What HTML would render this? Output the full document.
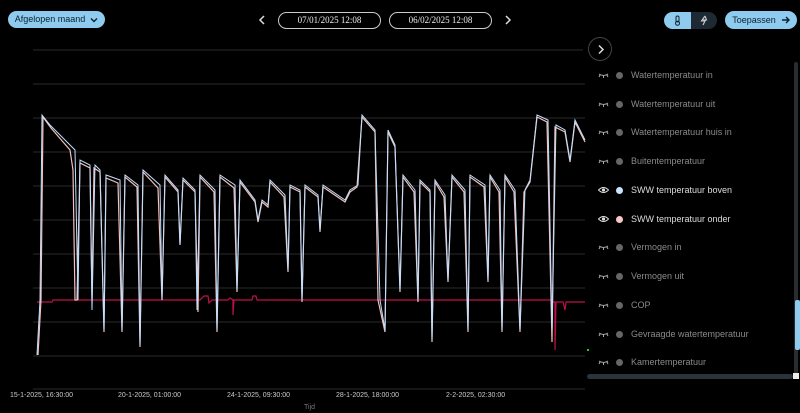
<!DOCTYPE html>
<html><head><meta charset="utf-8"><style>
*{margin:0;padding:0;box-sizing:border-box}
body{width:800px;height:413px;background:#000;overflow:hidden;position:relative;font-family:"Liberation Sans",sans-serif;color:#ddd}
.pill{position:absolute;border-radius:10px;font-size:9px;line-height:1;display:flex;align-items:center;justify-content:center;white-space:nowrap}
.leg{position:absolute;left:598px;font-size:9px;color:#8a8a8a;display:flex;align-items:center;height:12px}
.leg svg{width:11px;height:8px}
.leg .dot{width:7px;height:7px;border-radius:50%;background:#666;margin:0 8px 0 7px}
.leg.on{color:#ddd}
</style></head><body>
<div class="pill" style="left:8px;top:11px;width:97px;height:17px;background:#8ecbee;color:#0a2030">Afgelopen maand&nbsp;&nbsp;<svg width="8" height="6" viewBox="0 0 8 6"><path d="M1 1.5 L4 4.5 L7 1.5" stroke="#0a2030" stroke-width="1.4" fill="none"/></svg></div>
<svg style="position:absolute;left:258px;top:14px" width="8" height="12" viewBox="0 0 8 12"><path d="M6 2 L2 6 L6 10" stroke="#ddd" stroke-width="1.5" fill="none"/></svg>
<div class="pill" style="left:278px;top:12px;width:103px;height:17px;border:1.5px solid #ccc;color:#eee;font-family:'Liberation Serif',serif;font-size:9px">07/01/2025 12:08</div>
<div class="pill" style="left:389px;top:12px;width:103px;height:17px;border:1.5px solid #ccc;color:#eee;font-family:'Liberation Serif',serif;font-size:9px">06/02/2025 12:08</div>
<svg style="position:absolute;left:504px;top:14px" width="8" height="12" viewBox="0 0 8 12"><path d="M2 2 L6 6 L2 10" stroke="#ddd" stroke-width="1.5" fill="none"/></svg>
<div style="position:absolute;left:664px;top:12px;width:53px;height:17px;border-radius:9px;overflow:hidden;display:flex">
<div style="width:27px;background:#8ecbee;position:relative"><svg style="position:absolute;left:10px;top:3px" width="7" height="11" viewBox="0 0 7 11"><rect x="2" y="1" width="3" height="6" rx="1.5" stroke="#123" fill="none"/><circle cx="3.5" cy="8.3" r="2" stroke="#123" fill="none"/></svg></div>
<div style="width:26px;background:#1e2a33;position:relative"><svg style="position:absolute;left:9px;top:3px" width="8" height="11" viewBox="0 0 8 11"><path d="M5 1 L1.5 6 H5 L3 10 M5 1 L6.5 5 H3" stroke="#ccc" stroke-width="1.1" fill="none"/></svg></div></div>
<div class="pill" style="left:725px;top:11px;width:72px;height:18px;background:#8ecbee;color:#0a2030">Toepassen&nbsp;&nbsp;<svg width="9" height="8" viewBox="0 0 9 8"><path d="M1 4 H8 M5 1 L8 4 L5 7" stroke="#0a2030" stroke-width="1.4" fill="none"/></svg></div>
<div style="position:absolute;left:588px;top:37px;width:24px;height:24px;border:1px solid #444;border-radius:50%"><svg style="position:absolute;left:8px;top:6px" width="8" height="11" viewBox="0 0 8 11"><path d="M2 1.5 L6 5.5 L2 9.5" stroke="#ddd" stroke-width="1.5" fill="none"/></svg></div>
<svg style="position:absolute;left:0;top:0" width="800" height="413">
<g stroke="#2a2a2a" stroke-width="1">
<line x1="33" y1="50" x2="583" y2="50"/><line x1="33" y1="84" x2="585" y2="84"/><line x1="33" y1="118" x2="585" y2="118"/><line x1="33" y1="152" x2="585" y2="152"/><line x1="33" y1="186" x2="585" y2="186"/><line x1="33" y1="220" x2="585" y2="220"/><line x1="33" y1="254" x2="585" y2="254"/><line x1="33" y1="288" x2="585" y2="288"/><line x1="33" y1="322" x2="585" y2="322"/><line x1="33" y1="356" x2="585" y2="356"/><line x1="33" y1="389" x2="585" y2="389"/></g>
<polyline fill="none" stroke="#c0104a" stroke-width="1.2" points="37,302 52,302 53,300 200,300 204,296 208,296 209,303 212,300 228,300 230,298 233,300 233,315 234,300 252,300 253,296 256,296 257,300 550,300 553,302 555,302 555,350 556,302 563,302 565,310 566,302 585,302"/>
<polyline fill="none" stroke="#f5c0bc" stroke-width="1.2" points="38,355 41,300 43,117 51,128 70,150 73,170 75,300 77,300 80,163 90,168 92,300 94,168 100,172 104,332 106,178 118,183 122,332 125,177 137,187 140,347 143,172 158,188 162,300 165,177 178,192 180,245 183,180 195,192 198,312 200,177 214,192 217,332 220,177 234,188 237,292 240,182 255,202 258,222 262,202 268,207 270,182 284,197 288,272 290,187 300,192 302,302 305,187 318,197 320,232 323,187 345,202 350,192 357,187 362,117 375,132 378,300 385,332 388,132 395,147 400,292 403,177 414,192 418,302 420,182 430,192 432,342 435,182 444,197 448,282 452,177 464,192 468,332 470,177 484,187 488,282 490,177 499,192 502,332 505,177 514,192 520,332 524,192 530,182 537,117 547,122 552,342 555,127 565,132 570,162 575,122 585,142"/>
<polyline fill="none" stroke="#bfe0ff" stroke-width="1" points="37,355 40,300 42,115 50,125 75,150 78,300 80,160 90,165 92,310 95,165 100,170 104,330 106,175 120,180 122,330 125,175 138,185 140,345 143,170 160,185 162,300 165,175 178,190 180,245 183,178 195,190 197,310 200,175 215,190 217,330 220,175 235,185 237,290 240,180 255,200 258,220 262,200 268,205 270,180 285,195 288,270 290,185 300,190 302,300 305,185 318,195 320,230 323,185 345,200 350,190 358,185 362,115 375,130 380,300 385,330 388,130 395,145 400,290 403,175 415,190 418,300 420,180 430,190 432,340 435,180 445,195 448,280 452,175 465,190 468,330 470,175 485,185 488,280 490,175 500,190 502,330 505,175 515,190 520,330 525,190 530,180 537,115 548,120 552,330 556,125 565,130 570,160 575,120 585,140"/>
<rect x="794" y="62" width="4" height="312" rx="2" fill="#2a2d30"/>
<rect x="795" y="300" width="5" height="50" rx="2" fill="#8ecbee"/>
<rect x="587" y="374" width="206" height="5" rx="2.5" fill="#2a333a"/>
<rect x="793" y="373" width="6" height="6" fill="#eee"/>
<rect x="587" y="349" width="2" height="2" fill="#2c2"/>
</svg>
<div style="position:absolute;top:392px;left:10px;width:580px;font-size:7px;color:#ccc">
<span style="position:absolute;left:0">15-1-2025, 16:30:00</span>
<span style="position:absolute;left:108px">20-1-2025, 01:00:00</span>
<span style="position:absolute;left:217px">24-1-2025, 09:30:00</span>
<span style="position:absolute;left:326px">28-1-2025, 18:00:00</span>
<span style="position:absolute;left:436px">2-2-2025, 02:30:00</span></div>
<div style="position:absolute;top:404px;left:304px;font-size:7px;color:#777">Tijd</div>
<div class="leg" style="top:69px"><svg viewBox="0 0 11 8"><path d="M1 3 Q5.5 6 10 3 M2 4 L1 6 M5.5 5 V7 M9 4 L10 6" stroke="#aaa" fill="none"/></svg><span class="dot"></span>Watertemperatuur in</div>
<div class="leg" style="top:98px"><svg viewBox="0 0 11 8"><path d="M1 3 Q5.5 6 10 3 M2 4 L1 6 M5.5 5 V7 M9 4 L10 6" stroke="#aaa" fill="none"/></svg><span class="dot"></span>Watertemperatuur uit</div>
<div class="leg" style="top:126px"><svg viewBox="0 0 11 8"><path d="M1 3 Q5.5 6 10 3 M2 4 L1 6 M5.5 5 V7 M9 4 L10 6" stroke="#aaa" fill="none"/></svg><span class="dot"></span>Watertemperatuur huis in</div>
<div class="leg" style="top:155px"><svg viewBox="0 0 11 8"><path d="M1 3 Q5.5 6 10 3 M2 4 L1 6 M5.5 5 V7 M9 4 L10 6" stroke="#aaa" fill="none"/></svg><span class="dot"></span>Buitentemperatuur</div>
<div class="leg on" style="top:184px"><svg viewBox="0 0 11 8"><path d="M0.5 4 Q5.5 -1 10.5 4 Q5.5 9 0.5 4Z" stroke="#ddd" fill="none"/><circle cx="5.5" cy="4" r="1.6" fill="#ddd"/></svg><span class="dot" style="background:#c8e4ff"></span>SWW temperatuur boven</div>
<div class="leg on" style="top:213px"><svg viewBox="0 0 11 8"><path d="M0.5 4 Q5.5 -1 10.5 4 Q5.5 9 0.5 4Z" stroke="#ddd" fill="none"/><circle cx="5.5" cy="4" r="1.6" fill="#ddd"/></svg><span class="dot" style="background:#f8c8c4"></span>SWW temperatuur onder</div>
<div class="leg" style="top:241px"><svg viewBox="0 0 11 8"><path d="M1 3 Q5.5 6 10 3 M2 4 L1 6 M5.5 5 V7 M9 4 L10 6" stroke="#aaa" fill="none"/></svg><span class="dot"></span>Vermogen in</div>
<div class="leg" style="top:270px"><svg viewBox="0 0 11 8"><path d="M1 3 Q5.5 6 10 3 M2 4 L1 6 M5.5 5 V7 M9 4 L10 6" stroke="#aaa" fill="none"/></svg><span class="dot"></span>Vermogen uit</div>
<div class="leg" style="top:299px"><svg viewBox="0 0 11 8"><path d="M1 3 Q5.5 6 10 3 M2 4 L1 6 M5.5 5 V7 M9 4 L10 6" stroke="#aaa" fill="none"/></svg><span class="dot"></span>COP</div>
<div class="leg" style="top:328px"><svg viewBox="0 0 11 8"><path d="M1 3 Q5.5 6 10 3 M2 4 L1 6 M5.5 5 V7 M9 4 L10 6" stroke="#aaa" fill="none"/></svg><span class="dot"></span>Gevraagde watertemperatuur</div>
<div class="leg" style="top:356px"><svg viewBox="0 0 11 8"><path d="M1 3 Q5.5 6 10 3 M2 4 L1 6 M5.5 5 V7 M9 4 L10 6" stroke="#aaa" fill="none"/></svg><span class="dot"></span>Kamertemperatuur</div>
</body></html>
